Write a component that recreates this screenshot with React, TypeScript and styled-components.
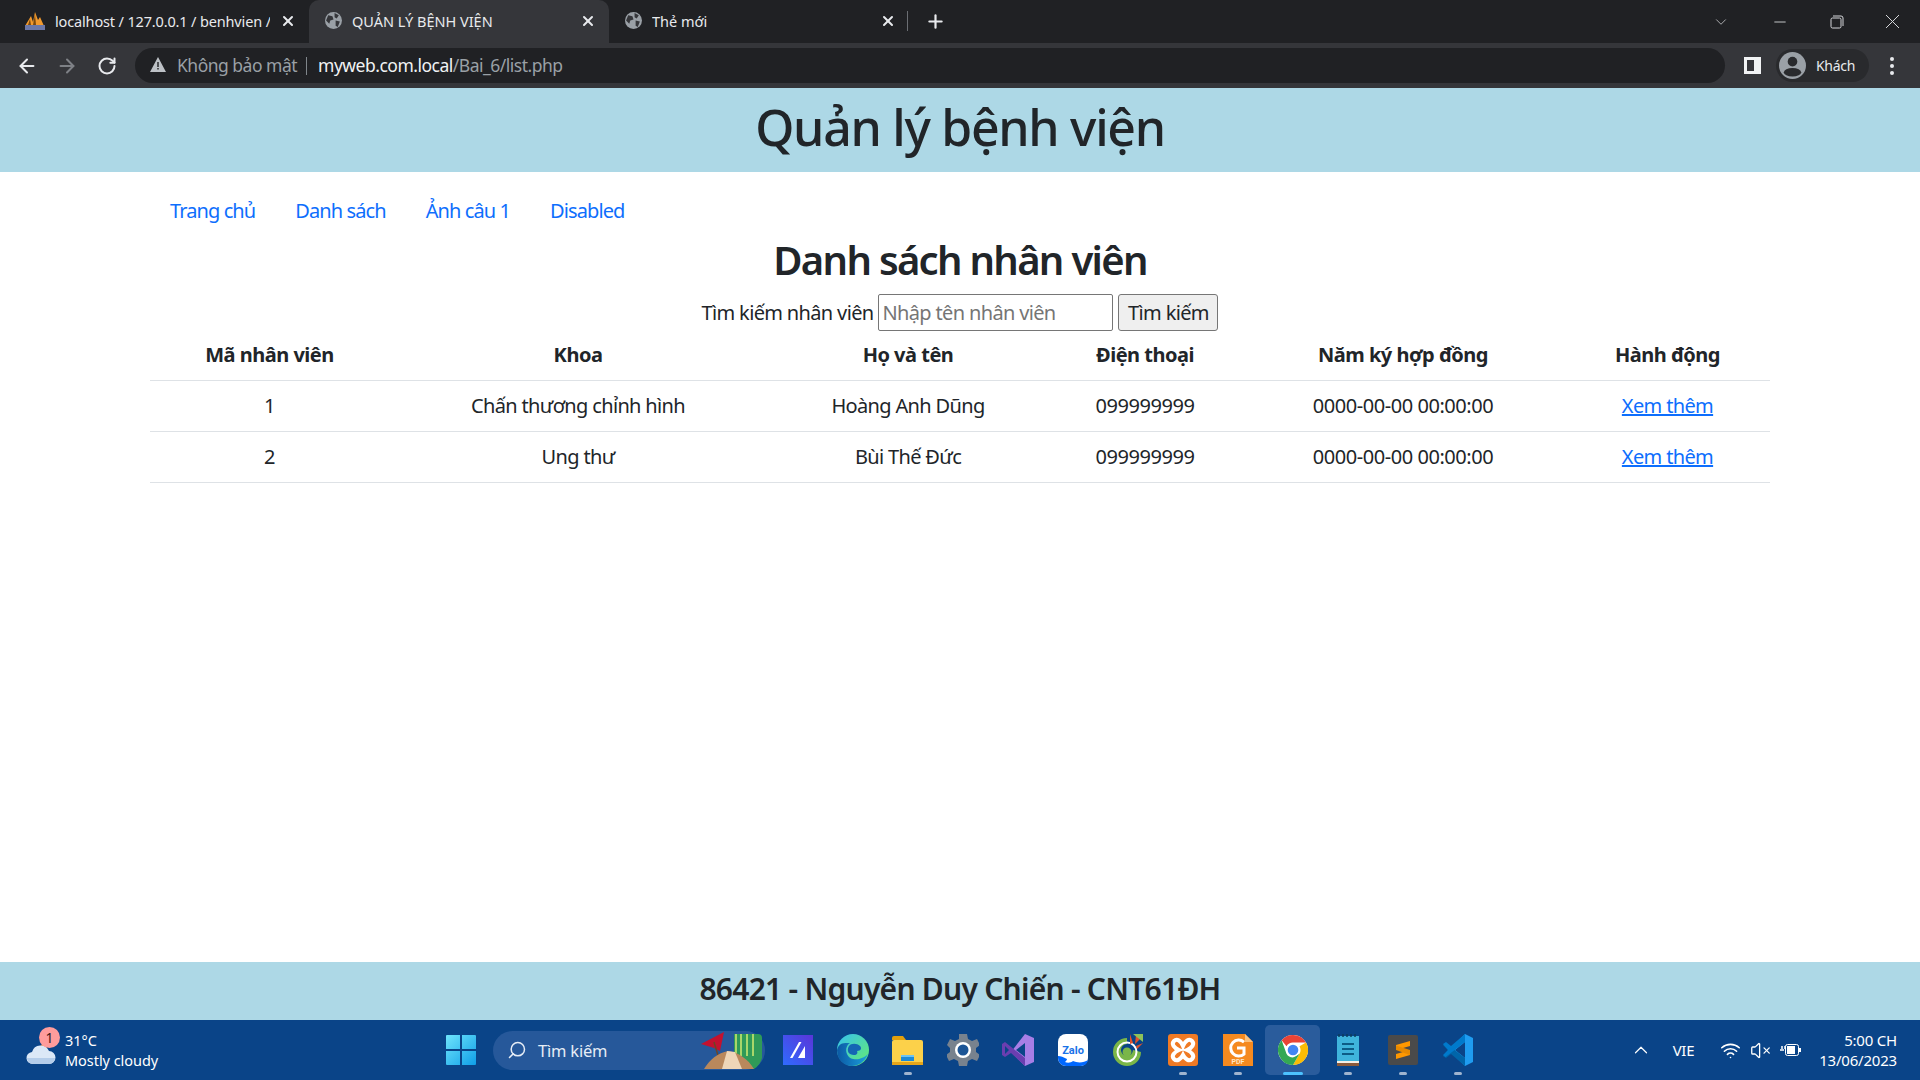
import React from 'react';
import styled, { createGlobalStyle } from 'styled-components';
import { ArrowLeft, ArrowRight, RotateCw, X, Plus, ChevronDown, Minus, ChevronUp, Search, VolumeX, Wifi } from 'lucide-react';

const FONT = '"Noto Sans", "Open Sans", sans-serif';

const Global = createGlobalStyle`
  html, body { margin: 0; padding: 0; height: 100%; overflow: hidden; background: #fff; }
  #root { height: 100%; }
  * { box-sizing: border-box; }
`;

const Screen = styled.div`
  display: flex;
  flex-direction: column;
  height: 1080px;
  font-family: ${FONT};
  color: #212529;
`;

/* browser chrome */
const TabStrip = styled.div`
  display: flex;
  align-items: stretch;
  height: 43px;
  padding-left: 9px;
  background: #202124;
  color: #e8eaed;
`;
const Tab = styled.div<{ $active?: boolean }>`
  display: flex;
  align-items: center;
  width: 300px;
  padding: 0 13px 2px 16px;
  gap: 10px;
  font-size: 14.5px;
  white-space: nowrap;
  border-radius: 10px 10px 0 0;
  background: ${({ $active }) => ($active ? '#35363a' : 'transparent')};
`;
const TabTitle = styled.span<{ $fade?: boolean }>`
  flex: 1;
  overflow: hidden;
  letter-spacing: ${({ $fade }) => ($fade ? '-0.15px' : '0')};
`;
const TabDivider = styled.div`
  width: 1px;
  height: 20px;
  margin: 11px 0 0 -2px;
  background: #6b6e73;
`;
const NewTab = styled.div`
  display: flex;
  align-items: center;
  margin-left: 17px;
  color: #e8eaed;
`;
const WindowControls = styled.div`
  display: flex;
  align-items: center;
  margin-left: auto;
  padding-right: 20px;
  gap: 41px;
  color: #d5d7da;
`;
const Toolbar = styled.div`
  display: flex;
  align-items: center;
  height: 45px;
  padding-left: 16px;
  background: #35363a;
  color: #e8eaed;
`;
const NavButtons = styled.div`
  display: flex;
  align-items: center;
  gap: 18px;
  width: 119px;
`;
const ReloadIcon = styled(RotateCw)`
  margin-left: 1px;
`;
const Omnibox = styled.div`
  display: flex;
  align-items: center;
  width: 1590px;
  height: 35px;
  padding: 0 0 2px 15px;
  border-radius: 18px;
  background: #202124;
  font-size: 17.5px;
  letter-spacing: -0.5px;
  color: #9aa0a6;
  white-space: nowrap;
`;
const Insecure = styled.span`
  margin-left: 11px;
`;
const OmniDivider = styled.span`
  width: 1px;
  height: 18px;
  margin: 2px 11px 0 9px;
  background: #80868b;
`;
const Host = styled.span`
  color: #f1f3f4;
`;
const SideButton = styled.div`
  width: 17px;
  height: 17px;
  margin-left: 19px;
  border: 3px solid #f1f3f4;
  border-right-width: 7px;
`;
const Profile = styled.div`
  display: flex;
  align-items: center;
  gap: 10px;
  width: 93px;
  height: 33px;
  margin-left: 15px;
  padding-left: 3px;
  border-radius: 17px;
  background: #292a2d;
  font-size: 14px;
  letter-spacing: -0.3px;
`;
const Kebab = styled.div`
  display: flex;
  flex-direction: column;
  gap: 3px;
  margin-left: 21px;
`;
const Dot = styled.span`
  width: 4px;
  height: 4px;
  border-radius: 50%;
  background: #e8eaed;
`;

/* page */
const Header = styled.header`
  display: flex;
  justify-content: center;
  align-items: center;
  height: 84px;
  padding-bottom: 7px;
  background: lightblue;
`;
const SiteTitle = styled.h1`
  margin: 0;
  font-size: 50px;
  font-weight: 500;
  line-height: 60px;
  letter-spacing: -1.3px;
`;
const Main = styled.main`
  flex: 1;
  padding: 14px 150px 0;
`;
const Nav = styled.nav`
  display: flex;
  font-size: 20px;
  line-height: 30px;
  letter-spacing: -0.9px;
`;
const NavLink = styled.a`
  padding: 10px 20px;
  color: #0d6efd;
  text-decoration: none;
`;
const Heading = styled.h2`
  margin: 0 0 9px;
  text-align: center;
  font-size: 40px;
  font-weight: 600;
  line-height: 48px;
  letter-spacing: -1.7px;
`;
const SearchForm = styled.form`
  display: flex;
  justify-content: center;
  align-items: center;
  gap: 5px;
  height: 38px;
  font-size: 20px;
  letter-spacing: -0.65px;
`;
const SearchInput = styled.input`
  width: 235px;
  height: 37px;
  padding: 0 3px;
  border: 1px solid #767676;
  border-radius: 2px;
  font: inherit;
  letter-spacing: inherit;
  color: #212529;
  &::placeholder { color: #757575; opacity: 1; }
`;
const SearchButton = styled.button`
  width: 100px;
  height: 37px;
  padding: 0;
  border: 1px solid #767676;
  border-radius: 3px;
  background: #efefef;
  font: inherit;
  letter-spacing: inherit;
  color: #212529;
`;
const Table = styled.table`
  width: 1620px;
  table-layout: fixed;
  border-collapse: collapse;
  font-size: 20px;
  line-height: 30px;
  letter-spacing: -0.5px;
  margin-top: -1px;
`;
const Th = styled.th`
  padding: 10px;
  text-align: center;
  font-weight: 700;
  border-bottom: 1px solid #dee2e6;
`;
const Td = styled.td<{ $numeric?: boolean }>`
  padding: 10px;
  text-align: center;
  letter-spacing: ${({ $numeric }) => ($numeric ? '-0.45px' : '-0.65px')};
  border-bottom: 1px solid #dee2e6;
`;
const MoreLink = styled.a`
  color: #0d6efd;
  text-decoration: underline;
`;
const Footer = styled.footer`
  display: flex;
  justify-content: center;
  align-items: center;
  height: 58px;
  padding-bottom: 6px;
  background: lightblue;
  font-size: 30px;
  font-weight: 600;
  letter-spacing: -0.75px;
`;

/* windows taskbar */
const Taskbar = styled.div`
  display: flex;
  align-items: center;
  height: 60px;
  background: #0a4488;
  color: #fff;
`;
const Weather = styled.div`
  position: relative;
  display: flex;
  align-items: center;
  gap: 9px;
  width: 446px;
  padding-left: 26px;
  font-size: 14.5px;
  letter-spacing: -0.05px;
  line-height: 20px;
`;
const WeatherBadge = styled.span`
  position: absolute;
  left: 39px;
  top: -3px;
  width: 21px;
  height: 21px;
  border-radius: 50%;
  background: #ff9c9c;
  color: #3a1a1a;
  font-size: 14px;
  line-height: 21px;
  text-align: center;
`;
const TaskSearch = styled.div`
  display: flex;
  align-items: center;
  gap: 11px;
  width: 272px;
  height: 39px;
  margin-left: 17px;
  padding: 0 3px 0 14px;
  border-radius: 20px;
  background: #26589a;
  font-size: 16.5px;
  letter-spacing: -0.2px;
  color: #e6edf6;
`;
const TaskLabel = styled.span`
  flex: 1;
`;
const SearchGlass = styled(Search)`
  transform: scaleX(-1);
`;
const TaskIcons = styled.div`
  display: flex;
  margin-left: 5px;
`;
const TaskIcon = styled.div<{ $active?: boolean }>`
  position: relative;
  display: flex;
  justify-content: center;
  align-items: center;
  width: 55px;
  height: 50px;
  border-radius: 5px;
  background: ${({ $active }) => ($active ? '#2a5c9c' : 'transparent')};
`;
const RunMark = styled.span<{ $active?: boolean }>`
  position: absolute;
  bottom: 0;
  left: 50%;
  width: ${({ $active }) => ($active ? 20 : 8)}px;
  height: 3px;
  margin-left: ${({ $active }) => ($active ? -10 : -4)}px;
  border-radius: 2px;
  background: ${({ $active }) => ($active ? '#4cc2ff' : '#9fb4cf')};
`;
const Tray = styled.div`
  display: flex;
  align-items: center;
  margin-left: auto;
  padding-right: 23px;
  font-size: 15px;
`;
const TrayLang = styled.span`
  margin: 0 26px 0 21px;
  letter-spacing: -0.3px;
`;
const TrayIcons = styled.div`
  display: flex;
  align-items: center;
  gap: 9px;
`;
const Clock = styled.div`
  margin-left: 18px;
  text-align: right;
  line-height: 20px;
  letter-spacing: -0.2px;
`;

const Globe = () => (
  <svg width="17" height="17" viewBox="0 0 16 16">
    <circle cx="8" cy="8" r="8" fill="#9aa0a6" />
    <path d="M3 3l4 1 1 3-3 1-1 3-3-3zM9 1l4 2-2 3-2-1zM10 8l4 1-2 5-2-1z" fill="#35363a" />
  </svg>
);

const PmaIcon = () => (
  <svg width="20" height="20" viewBox="0 0 20 20">
    <path d="M0 15L6 5l2 6 2-10 3 8 2-3 4 9z" fill="#f29a2e" />
    <path d="M10 3l1 11H8zM5 8l1 6H3z" fill="#7a4a10" />
    <rect x="0" y="14" width="20" height="5" fill="#6c78a8" />
  </svg>
);

const GuestAvatar = () => (
  <svg width="27" height="27" viewBox="0 0 28 28">
    <circle cx="14" cy="14" r="14" fill="#9aa0a6" />
    <circle cx="14" cy="10" r="5" fill="#292a2d" />
    <ellipse cx="14" cy="21" rx="9" ry="4.5" fill="#292a2d" />
  </svg>
);

const Cloud = () => (
  <svg width="30" height="32" viewBox="0 0 30 32">
    <path d="M17 8l4 6h-7z" fill="#f08a2c" />
    <path d="M7 30a6 6 0 0 1-1-12 9 9 0 0 1 17-1 6.500 6.500 0 0 1 0 13z" fill="#dbe8f7" />
    <path d="M1 24h28a6 6 0 0 1-6 6H7a6 6 0 0 1-6-6z" fill="#b4cdea" />
  </svg>
);

const StartLogo = () => (
  <svg width="30" height="30" viewBox="0 0 30 30">
    <defs>
      <linearGradient id="win" x1="0" y1="0" x2="1" y2="1">
        <stop offset="0" stopColor="#6fe4fb" />
        <stop offset="1" stopColor="#0f9fe8" />
      </linearGradient>
    </defs>
    <path d="M0 1a1 1 0 0 1 1-1h13v14H0zM16 0h13a1 1 0 0 1 1 1v13H16zM0 16h14v14H1a1 1 0 0 1-1-1zM16 16h14v13a1 1 0 0 1-1 1H16z" fill="url(#win)" />
  </svg>
);

const SearchArt = () => (
  <svg width="62" height="37" viewBox="0 0 62 37">
    <path d="M34 2h24a4 4 0 0 1 4 4v20a18 18 0 0 1-8 11H34z" fill="#2f9a58" />
    <path d="M36 2v22M41 2v22M47 2v22M53 2v22" stroke="#a9d66a" strokeWidth="2" />
    <path d="M1 12L24 0l-4 19-6-3z" fill="#c3122f" />
    <path d="M14 10l8 27" stroke="#6d4526" strokeWidth="1.500" />
    <path d="M4 37c6-10 14-16 24-18 10 1 20 8 26 18z" fill="#b9885c" />
    <path d="M22 37l5-18 8 1 7 17z" fill="#eed6b8" />
  </svg>
);

const AppIcons: React.ReactNode[] = [
  <svg key="ms" width="30" height="30" viewBox="0 0 30 30">
    <defs>
      <linearGradient id="ms" x1="0" y1="1" x2="1" y2="0">
        <stop offset="0" stopColor="#2f6bff" />
        <stop offset="1" stopColor="#5a35d8" />
      </linearGradient>
    </defs>
    <rect width="30" height="30" fill="url(#ms)" />
    <path d="M7 23l9-16h2.500l-9 16zM15 23l7-12v12z" fill="#fff" />
  </svg>,
  <svg key="edge" width="32" height="32" viewBox="0 0 32 32">
    <defs>
      <linearGradient id="edgeA" x1="0" y1="1" x2="1" y2="1">
        <stop offset="0" stopColor="#0c59a4" />
        <stop offset="1" stopColor="#1aa0dc" />
      </linearGradient>
      <linearGradient id="edgeB" x1="0" y1="0" x2="1" y2="1">
        <stop offset="0" stopColor="#35c1f1" />
        <stop offset="1" stopColor="#66eb6e" />
      </linearGradient>
    </defs>
    <circle cx="16" cy="16" r="16" fill="url(#edgeB)" />
    <path d="M31 20c-3 8-10 12-16 12C7 32 0 26 0 16 2 8 8 9 13 9c-3 2-5 6-3 11 2 5 8 6 12 5 4-1 7-3 9-5z" fill="url(#edgeA)" />
    <path d="M20 17c1 2 0 4-3 4-5 0-8-4-5-9 2-3 8-3 11 0 2 2 1 5-3 5z" fill="#1565b4" />
  </svg>,
  <svg key="files" width="31" height="30" viewBox="0 0 31 30">
    <path d="M0 3a2 2 0 0 1 2-2h9l3 4h-14z" fill="#e2a00c" />
    <rect y="5" width="31" height="25" rx="2" fill="#fcd14a" />
    <path d="M9 20h13v6H9z" fill="#1c8ad6" />
    <rect y="27" width="31" height="3" fill="#e6a51a" />
    <path d="M9 20h13v2H9z" fill="#6cc3f2" />
  </svg>,
  <svg key="gear" width="32" height="32" viewBox="0 0 32 32">
    <path d="M12 0h8l1 5 4 2 5-2 3 6-4 3v4l4 3-3 6-5-2-4 2-1 5h-8l-1-5-4-2-5 2-3-6 4-3v-4L0 11l3-6 5 2 4-2z" fill="#78828e" />
    <circle cx="16" cy="16" r="8" fill="#fff" />
    <circle cx="16" cy="16" r="5.500" fill="#1c5596" />
  </svg>,
  <svg key="vs" width="32" height="32" viewBox="0 0 32 32">
    <path d="M23 0l9 4v24l-9 4-14-14z" fill="#a77ee6" />
    <path d="M23 9v14l-9-7z" fill="#0a4488" />
    <path d="M0 10l3-2 20 16v8L9 19l-6 4-3-2zM3 12v8l4-4z" fill="#6a3eb0" />
  </svg>,
  <svg key="zalo" width="30" height="32" viewBox="0 0 30 32">
    <path d="M8 0h14a8 8 0 0 1 8 8v16a8 8 0 0 1-8 8H8a8 8 0 0 1-8-8V8a8 8 0 0 1 8-8z" fill="#fff" />
    <path d="M0 22v2a8 8 0 0 0 8 8h14a8 8 0 0 0 8-6c-4 3-11 3-15 1-2 2-6 2-8 1 1-1 2-2 2-3-4-2-6-3-9-3z" fill="#0068ff" />
    <text x="15" y="20" textAnchor="middle" fontSize="11" fontWeight="700" fontFamily="Roboto, sans-serif" fill="#1a73e8">Zalo</text>
  </svg>,
  <svg key="coccoc" width="30" height="32" viewBox="0 0 30 32">
    <path d="M14 4a14 14 0 1 0 14 14l-8-2a6 6 0 1 1-6-6z" fill="#7ab648" />
    <circle cx="14" cy="18" r="9.500" fill="none" stroke="#fff" strokeWidth="2" />
    <circle cx="14" cy="18" r="4.500" fill="#7ab648" />
    <path d="M17 0l3 9-3 1zM23 1l-1 9 5-5zM30 9l-7 3 1 3z" fill="#e2512a" />
    <path d="M20 0h10v8z" fill="#8dc25a" />
  </svg>,
  <svg key="xampp" width="30" height="32" viewBox="0 0 30 32">
    <rect width="30" height="32" rx="3" fill="#f07a24" />
    <path d="M6 7c3-3 7 0 9 5 2-5 6-8 9-5 3 3 0 7-5 9 5 2 8 6 5 9-3 3-7 0-9-4-2 4-6 7-9 4-3-3 0-7 5-9-5-2-8-6-5-9z" fill="none" stroke="#fff" strokeWidth="4" />
  </svg>,
  <svg key="pdf" width="30" height="32" viewBox="0 0 30 32">
    <path d="M0 0h22l8 8v24H0z" fill="#f58a1f" />
    <path d="M22 0l8 8h-8z" fill="#fbc27e" />
    <path d="M21 8a8 8 0 1 0 0 12v-6h-7" fill="none" stroke="#fff" strokeWidth="3" />
    <text x="15" y="30" textAnchor="middle" fontSize="7" fontWeight="700" fontFamily="Roboto, sans-serif" fill="#ffe5c4">PDF</text>
  </svg>,
  <svg key="chrome" width="30" height="30" viewBox="0 0 48 48">
    <circle cx="24" cy="24" r="24" fill="#fff" />
    <path d="M24 0a24 24 0 0 1 20.800 12H24a12 12 0 0 0-10.400 6L5.800 8.500A24 24 0 0 1 24 0z" fill="#ea4335" />
    <path d="M44.800 12A24 24 0 0 1 24 48l10.400-18a12 12 0 0 0 0-12z" fill="#fbbc04" />
    <path d="M24 48A24 24 0 0 1 5.800 8.500L13.600 30a12 12 0 0 0 10.400 6l10.400-6z" fill="#34a853" />
    <circle cx="24" cy="24" r="11" fill="#fff" />
    <circle cx="24" cy="24" r="8.500" fill="#4285f4" />
  </svg>,
  <svg key="notepad" width="22" height="32" viewBox="0 0 22 32">
    <rect y="2" width="22" height="27" fill="#3fb4dc" />
    <rect y="27" width="22" height="5" fill="#8a5a3c" />
    <rect y="27" width="22" height="2" fill="#f4efe6" />
    <path d="M5 10h12M5 15h12M5 20h12" stroke="#0d5c86" strokeWidth="2" />
    <path d="M2 0v3M6 0v3M10 0v3M14 0v3M18 0v3" stroke="#0d3c5c" strokeWidth="1.500" />
  </svg>,
  <svg key="sublime" width="30" height="30" viewBox="0 0 30 30">
    <rect width="30" height="30" rx="2" fill="#4a4a4a" />
    <path d="M22 6v5L8 15v-5zM8 19v5l14-4v-5z" fill="#ff9800" />
    <path d="M8 10.500l14 4.500v5L8 15z" fill="#e88a00" />
  </svg>,
  <svg key="vscode" width="30" height="32" viewBox="0 0 30 32">
    <path d="M22 0l8 4v24l-8 4-12-12V12z" fill="#1f9cf0" />
    <path d="M22 8v16l-10-8z" fill="#0a4488" />
    <path d="M0 11l2.500-2L22 24v8L8 20l-5 4-3-2 5-6z" fill="#0065a9" />
    <path d="M0 21l2.500 2L22 8V0L8 12 3 8 0 10l5 6z" fill="#007acc" />
  </svg>,
];

const App = () => {
  const rows = [
    { id: 1, dept: 'Chấn thương chỉnh hình', name: 'Hoàng Anh Dũng', phone: '099999999', year: '0000-00-00 00:00:00' },
    { id: 2, dept: 'Ung thư', name: 'Bùi Thế Đức', phone: '099999999', year: '0000-00-00 00:00:00' },
  ];
  const colWidths = [239, 378, 282, 192, 324, 205];
  return (
    <Screen>
      <Global />
      <TabStrip>
        <Tab>
          <PmaIcon />
          <TabTitle $fade>localhost / 127.0.0.1 / benhvien /</TabTitle>
          <X size={16} strokeWidth={3} />
        </Tab>
        <Tab $active>
          <Globe />
          <TabTitle>QUẢN LÝ BỆNH VIỆN</TabTitle>
          <X size={16} strokeWidth={3} />
        </Tab>
        <Tab>
          <Globe />
          <TabTitle>Thẻ mới</TabTitle>
          <X size={16} strokeWidth={3} />
        </Tab>
        <TabDivider />
        <NewTab>
          <Plus size={21} strokeWidth={2.5} />
        </NewTab>
        <WindowControls>
          <ChevronDown size={18} strokeWidth={1} />
          <Minus size={18} strokeWidth={1.2} />
          <svg width="14" height="14" viewBox="0 0 14 14" fill="none" stroke="#d5d7da">
            <rect x="1" y="3" width="10" height="10" rx="1.500" />
            <path d="M3 1h8a2 2 0 0 1 2 2v8" />
          </svg>
          <svg width="15" height="15" viewBox="0 0 15 15" stroke="#d5d7da">
            <path d="M1 1l13 13M14 1L1 14" />
          </svg>
        </WindowControls>
      </TabStrip>
      <Toolbar>
        <NavButtons>
          <ArrowLeft size={22} strokeWidth={2.2} />
          <ArrowRight size={22} strokeWidth={2.2} color="#7e8186" />
          <ReloadIcon size={20} strokeWidth={2.4} />
        </NavButtons>
        <Omnibox>
          <svg width="16" height="15" viewBox="0 0 16 15">
            <path d="M8 0l8 15H0z" fill="#bdc1c6" />
            <path d="M7.300 5h1.400v5H7.300zM7.300 11h1.400v1.500H7.300z" fill="#202124" />
          </svg>
          <Insecure>Không bảo mật</Insecure>
          <OmniDivider />
          <Host>myweb.com.local</Host>/Bai_6/list.php
        </Omnibox>
        <SideButton />
        <Profile>
          <GuestAvatar />
          Khách
        </Profile>
        <Kebab>
          <Dot />
          <Dot />
          <Dot />
        </Kebab>
      </Toolbar>
      <Header>
        <SiteTitle>Quản lý bệnh viện</SiteTitle>
      </Header>
      <Main>
        <Nav>
          <NavLink href="#">Trang chủ</NavLink>
          <NavLink href="#">Danh sách</NavLink>
          <NavLink href="#">Ảnh câu 1</NavLink>
          <NavLink href="#">Disabled</NavLink>
        </Nav>
        <Heading>Danh sách nhân viên</Heading>
        <SearchForm>
          <span>Tìm kiếm nhân viên</span>
          <SearchInput placeholder="Nhập tên nhân viên" />
          <SearchButton type="button">Tìm kiếm</SearchButton>
        </SearchForm>
        <Table>
          <colgroup>
            {colWidths.map((w, i) => (
              <col key={i} width={w} />
            ))}
          </colgroup>
          <thead>
            <tr>
              <Th>Mã nhân viên</Th>
              <Th>Khoa</Th>
              <Th>Họ và tên</Th>
              <Th>Điện thoại</Th>
              <Th>Năm ký hợp đồng</Th>
              <Th>Hành động</Th>
            </tr>
          </thead>
          <tbody>
            {rows.map((r) => (
              <tr key={r.id}>
                <Td $numeric>{r.id}</Td>
                <Td>{r.dept}</Td>
                <Td>{r.name}</Td>
                <Td $numeric>{r.phone}</Td>
                <Td $numeric>{r.year}</Td>
                <Td>
                  <MoreLink href="#">Xem thêm</MoreLink>
                </Td>
              </tr>
            ))}
          </tbody>
        </Table>
      </Main>
      <Footer>86421 - Nguyễn Duy Chiến - CNT61ĐH</Footer>
      <Taskbar>
        <Weather>
          <Cloud />
          <WeatherBadge>1</WeatherBadge>
          <div>
            31°C
            <br />
            Mostly cloudy
          </div>
        </Weather>
        <StartLogo />
        <TaskSearch>
          <SearchGlass size={20} strokeWidth={1.8} />
          <TaskLabel>Tìm kiếm</TaskLabel>
          <SearchArt />
        </TaskSearch>
        <TaskIcons>
          {AppIcons.map((icon, i) => (
            <TaskIcon key={i} $active={i === 9}>
              {icon}
              {[2, 7, 8, 10, 11, 12].includes(i) && <RunMark />}
              {i === 9 && <RunMark $active />}
            </TaskIcon>
          ))}
        </TaskIcons>
        <Tray>
          <ChevronUp size={22} strokeWidth={1.3} />
          <TrayLang>VIE</TrayLang>
          <TrayIcons>
            <Wifi size={21} strokeWidth={1.8} />
            <VolumeX size={21} strokeWidth={1.5} />
            <svg width="21" height="16" viewBox="0 0 21 16" fill="none">
              <path d="M0 8h4M2 4v3M5 4v3" stroke="#fff" strokeWidth="1.500" />
              <rect x="5.500" y="2.500" width="13" height="11" rx="2" stroke="#fff" />
              <rect x="7" y="4" width="8" height="8" fill="#fff" />
              <rect x="19" y="6" width="2" height="4" fill="#fff" />
            </svg>
          </TrayIcons>
          <Clock>
            5:00 CH
            <br />
            13/06/2023
          </Clock>
        </Tray>
      </Taskbar>
    </Screen>
  );
};

export default App;
